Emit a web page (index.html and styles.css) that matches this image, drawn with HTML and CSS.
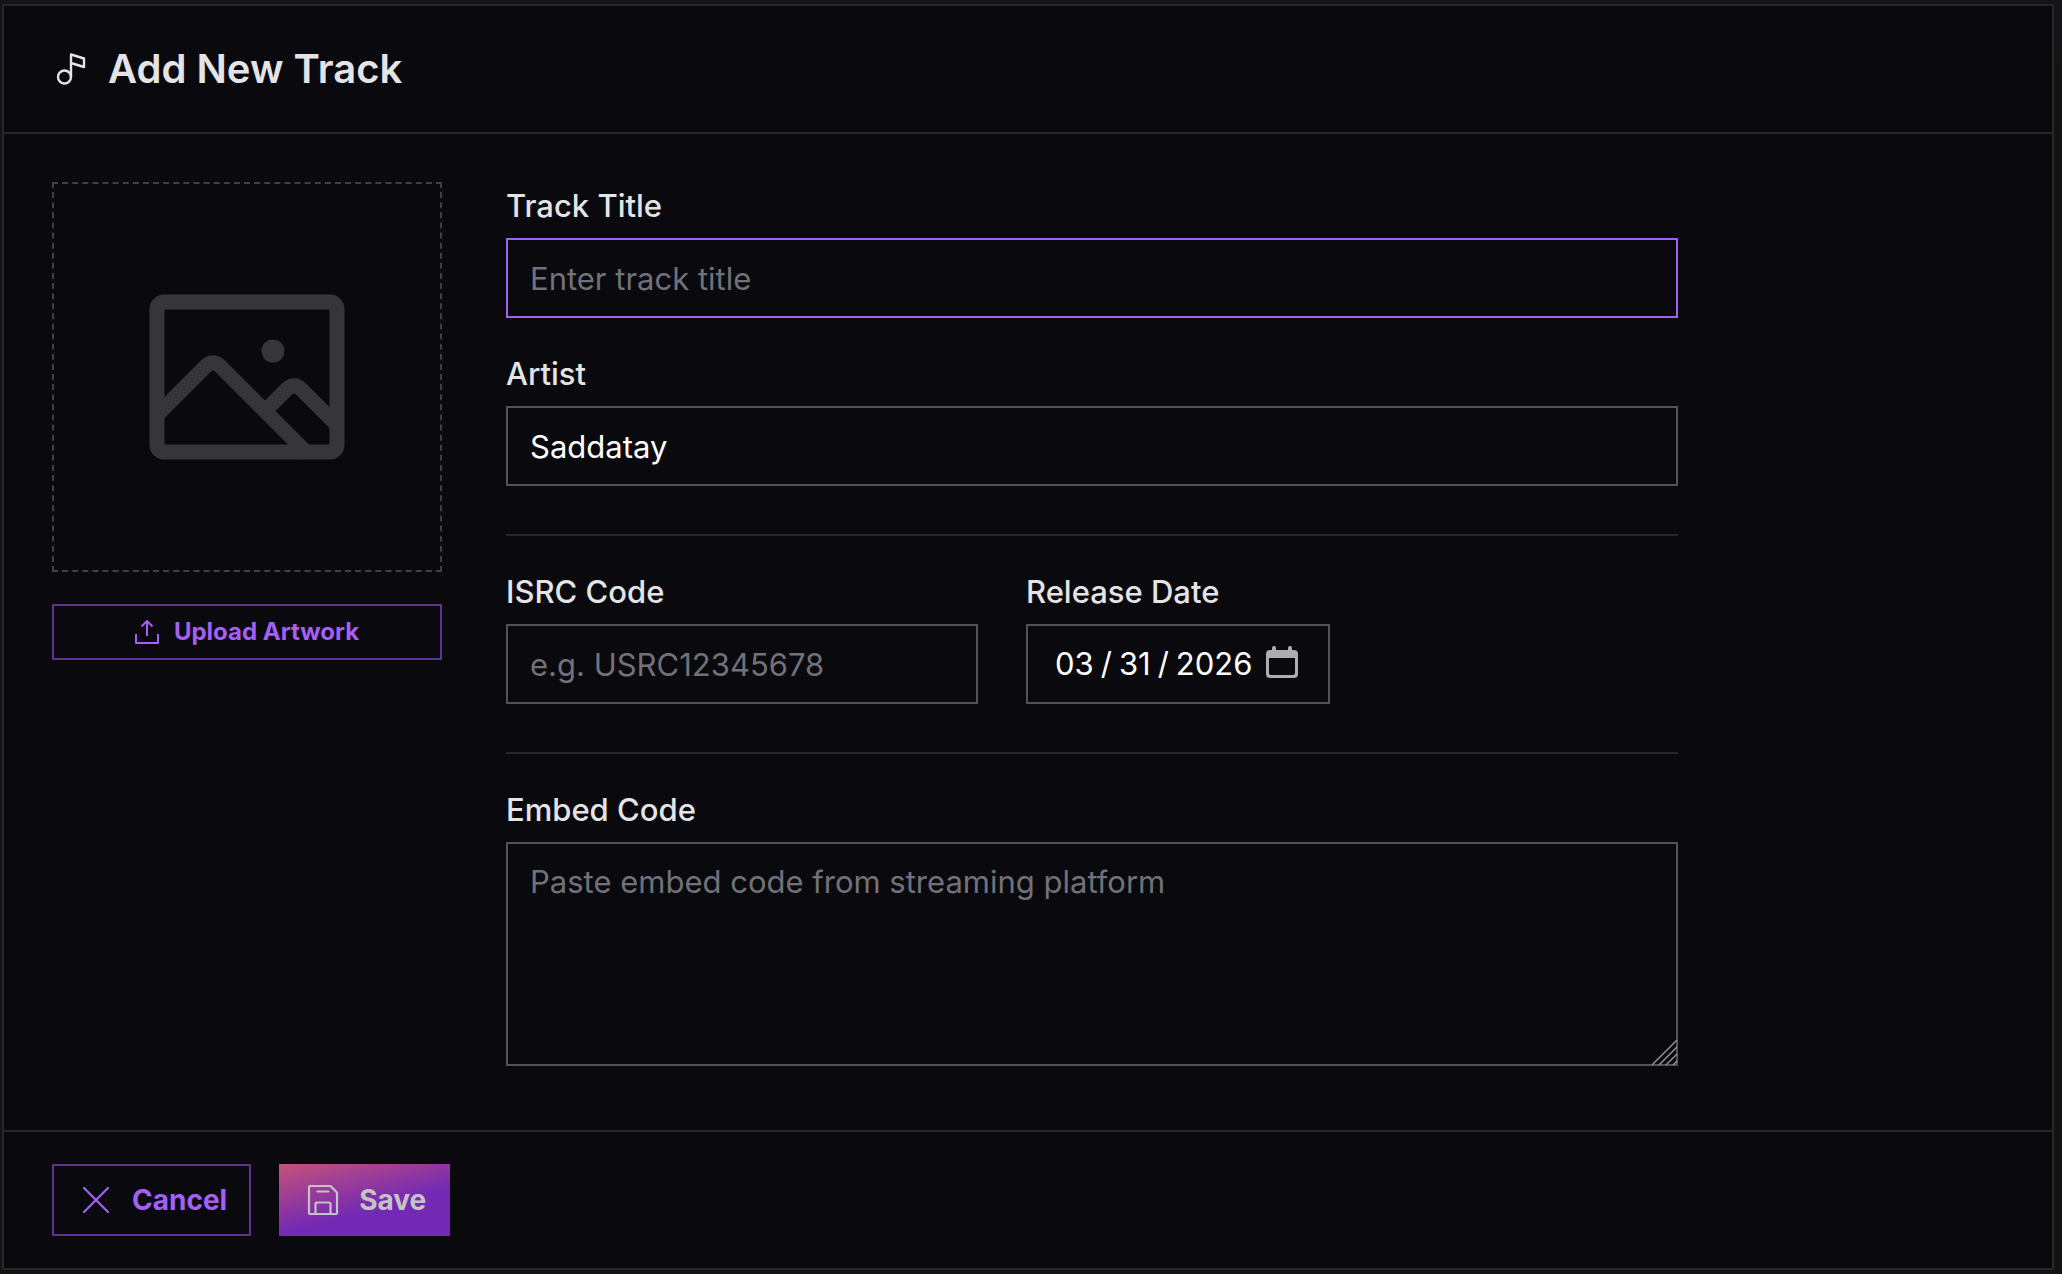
FILE: index.html
```html
<!DOCTYPE html>
<html lang="en">
<head>
<meta charset="utf-8">
<meta name="viewport" content="width=device-width, initial-scale=1">
<title>Add New Track</title>
<link rel="stylesheet" href="styles.css">
</head>
<body>
<form class="dialog">
  <header class="dialog-header">
    <svg class="note-icon" viewBox="0 0 32 32" aria-hidden="true"><circle cx="9.500" cy="24" r="6.500"/><path d="M16 24V1.500l13 4v8.500l-13-4"/></svg>
    <h1 class="dialog-title">Add New Track</h1>
  </header>
  <main class="dialog-body">
    <section class="artwork">
      <div class="artwork-preview">
        <svg class="image-icon" viewBox="0 0 196 166" aria-hidden="true"><rect x="8" y="8" width="180" height="150" rx="7"/><path d="M8 121L56.500 72.500Q64 65 71.500 72.500L157 158M116 117L137.500 95.500Q145 88 152.500 95.500L188 131"/><circle class="image-icon-sun" cx="124" cy="57" r="11.500"/></svg>
      </div>
      <button type="button" class="button button-outline upload-button">
        <svg class="upload-icon" viewBox="0 0 24 24" aria-hidden="true"><path d="M1 14v9h22v-9M12 16V1M6.500 6.500L12 1l5.500 5.500"/></svg>
        Upload Artwork
      </button>
    </section>
    <div class="fields">
      <div class="field">
        <label for="title">Track Title</label>
        <input class="control is-active" id="title" type="text" placeholder="Enter track title">
      </div>
      <div class="field">
        <label for="artist">Artist</label>
        <input class="control" id="artist" type="text" value="Saddatay">
      </div>
      <hr class="divider">
      <div class="field-row">
        <div class="field">
          <label for="isrc">ISRC Code</label>
          <input class="control" id="isrc" type="text" placeholder="e.g. USRC12345678">
        </div>
        <div class="field">
          <label for="date">Release Date</label>
          <input class="control date-control" id="date" type="date" value="2026-03-31">
        </div>
      </div>
      <hr class="divider">
      <div class="field">
        <label for="embed">Embed Code</label>
        <div class="textarea-wrap">
          <textarea class="control" id="embed" placeholder="Paste embed code from streaming platform"></textarea>
          <svg class="grip" viewBox="0 0 26 26" aria-hidden="true"><path d="M0 25L25 0M7 25L25 7M14 25L25 14M21 25l4-4"/></svg>
        </div>
      </div>
    </div>
  </main>
  <footer class="dialog-footer">
    <button type="button" class="button button-outline">
      <svg class="action-icon" viewBox="0 0 32 32" aria-hidden="true"><path d="M4 4l24 24M28 4L4 28"/></svg>
      Cancel
    </button>
    <button type="submit" class="button button-primary">
      <svg class="action-icon" viewBox="0 0 32 32" aria-hidden="true"><path d="M3 2h20.500L30 8.500V29a1 1 0 0 1-1 1H3a1 1 0 0 1-1-1V3a1 1 0 0 1 1-1zM8.500 30V20a1.500 1.500 0 0 1 1.500-1.500h12a1.500 1.500 0 0 1 1.500 1.500v10M10.500 7.500h11"/></svg>
      Save
    </button>
  </footer>
</form>
</body>
</html>
```
FILE: styles.css
```css
* {
  box-sizing: border-box;
}

body {
  margin: 0;
  padding: 4px 8px 4px 2px;
  background: linear-gradient(#141419, #121314 70px);
  color: #e4e4e7;
  font-family: Inter, "Liberation Sans", sans-serif;
  font-size: 31px;
  line-height: 44px;
}

svg {
  flex: none;
  fill: none;
  stroke: currentColor;
  stroke-width: 2;
  stroke-linejoin: round;
}

.dialog {
  border: 2px solid #27272a;
  background: #0a0a0e;
}

.dialog-header {
  display: flex;
  align-items: center;
  gap: 18px;
  padding: 38px 48px;
  border-bottom: 2px solid #27272a;
}

.dialog-title {
  margin: 0;
  font-size: 40px;
  font-weight: 600;
  line-height: 50px;
}

.note-icon {
  width: 38px;
  height: 32px;
  stroke-width: 2.4;
}

.dialog-body {
  display: flex;
  gap: 64px;
  padding: 48px 48px 64px;
}

.artwork {
  display: flex;
  flex: none;
  flex-direction: column;
  gap: 32px;
  width: 390px;
}

.artwork-preview {
  display: grid;
  place-items: center;
  aspect-ratio: 1;
  border: 2px dashed #3f3f46;
}

.image-icon {
  width: 196px;
  color: #363638;
  stroke-width: 15;
}

.image-icon-sun {
  fill: currentColor;
  stroke: none;
}

.button {
  display: flex;
  align-items: center;
  justify-content: center;
  gap: 20px;
  height: 72px;
  padding: 0 22px 0 26px;
  border: 2px solid transparent;
  font: 700 28px/40px Inter, "Liberation Sans", sans-serif;
}

.button-outline {
  border-color: #5b3590;
  background: transparent;
  color: #a45ff5;
}

.button-primary {
  background: linear-gradient(165deg, #c5527a, #7329b4 60%) border-box;
  color: #c4c4c6;
}

.upload-button {
  gap: 15px;
  height: 56px;
  padding: 0 22px;
  font-size: 24px;
  line-height: 32px;
}

.upload-icon {
  width: 24px;
  height: 24px;
}

.action-icon {
  width: 32px;
  height: 32px;
  stroke-width: 2.2;
  stroke-linecap: round;
}

.fields {
  flex: 1;
  max-width: 1172px;
}

.field + .field {
  margin-top: 32px;
}

.field label {
  display: block;
  margin-bottom: 8px;
  font-weight: 500;
  line-height: 48px;
}

.field-row {
  display: grid;
  grid-template-columns: 472px 304px;
  gap: 48px;
}

.field-row .field {
  margin: 0;
}

.divider {
  height: 2px;
  margin: 48px 0 32px;
  border: 0;
  background: #27272a;
}

.control {
  display: block;
  width: 100%;
  height: 80px;
  padding: 16px 22px;
  border: 2px solid #52525b;
  border-radius: 0;
  outline: 0;
  background: transparent;
  color: #ffffff;
  font: 400 31px/44px Inter, "Liberation Sans", sans-serif;
}

.control::placeholder {
  color: #71717a;
  opacity: 1;
}

.control.is-active,
.control:focus {
  border-color: #a45ff5;
}

.date-control {
  padding: 16px 30px 16px 26px;
}

.date-control::-webkit-datetime-edit-text {
  padding: 0 6px;
}

.date-control::-webkit-calendar-picker-indicator {
  width: 32px;
  height: 32px;
  margin: 0 0 4px;
  padding: 0;
  background: url("data:image/svg+xml,%3Csvg xmlns='http://www.w3.org/2000/svg' viewBox='0 0 32 32'%3E%3Cpath fill='%23adadaf' fill-rule='evenodd' d='M6 4V2a2 2 0 0 1 4 0v2h12V2a2 2 0 0 1 4 0v2h2a4 4 0 0 1 4 4v20a4 4 0 0 1-4 4H4a4 4 0 0 1-4-4V8a4 4 0 0 1 4-4zM3 12v15a2 2 0 0 0 2 2h22a2 2 0 0 0 2-2V12z'/%3E%3C/svg%3E") center / contain no-repeat;
}

.textarea-wrap {
  position: relative;
}

textarea.control {
  height: 224px;
  resize: none;
}

.grip {
  position: absolute;
  right: 0;
  bottom: 0;
  width: 26px;
  height: 26px;
  color: #98989c;
}

.grip path {
  stroke-width: 1.4;
}

.dialog-footer {
  display: flex;
  gap: 28px;
  padding: 32px 48px;
  border-top: 2px solid #27272a;
}
```
